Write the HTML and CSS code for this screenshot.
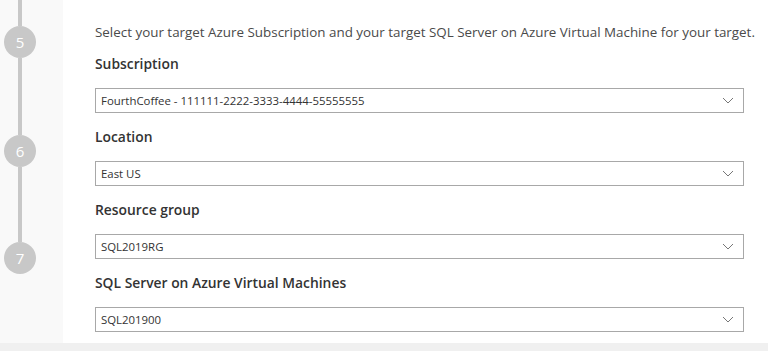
FILE: index.html
```html
<!DOCTYPE html>
<html lang="en">
<head>
<meta charset="utf-8">
<title>Target settings</title>
<link rel="stylesheet" href="styles.css">
</head>
<body>
<div class="page">
  <div class="main">
    <div class="timeline">
      <div class="seg seg-a"></div>
      <div class="step">5</div>
      <div class="seg seg-b"></div>
      <div class="step">6</div>
      <div class="seg seg-c"></div>
      <div class="step">7</div>
    </div>
    <div class="content">
      <p class="desc">Select your target Azure Subscription and your target SQL Server on Azure Virtual Machine for your target.</p>
      <div class="field">
        <div class="label">Subscription</div>
        <div class="select"><span class="value">FourthCoffee - 111111-2222-3333-4444-55555555</span><svg class="chev" width="12" height="7" viewBox="0 0 12 7"><path d="M1 1 L6 6 L11 1" fill="none" stroke="#777" stroke-width="1"/></svg></div>
      </div>
      <div class="field">
        <div class="label">Location</div>
        <div class="select"><span class="value">East US</span><svg class="chev" width="12" height="7" viewBox="0 0 12 7"><path d="M1 1 L6 6 L11 1" fill="none" stroke="#777" stroke-width="1"/></svg></div>
      </div>
      <div class="field">
        <div class="label">Resource group</div>
        <div class="select"><span class="value">SQL2019RG</span><svg class="chev" width="12" height="7" viewBox="0 0 12 7"><path d="M1 1 L6 6 L11 1" fill="none" stroke="#777" stroke-width="1"/></svg></div>
      </div>
      <div class="field">
        <div class="label">SQL Server on Azure Virtual Machines</div>
        <div class="select"><span class="value">SQL201900</span><svg class="chev" width="12" height="7" viewBox="0 0 12 7"><path d="M1 1 L6 6 L11 1" fill="none" stroke="#777" stroke-width="1"/></svg></div>
      </div>
    </div>
  </div>
  <div class="bottom"></div>
</div>
</body>
</html>
```
FILE: styles.css
```css
html, body {
  margin: 0;
  padding: 0;
  background: #ffffff;
}
body {
  width: 768px;
  height: 351px;
  overflow: hidden;
  font-family: "Open Sans", "Noto Sans", sans-serif;
}
.page {
  display: flex;
  flex-direction: column;
  height: 351px;
}
.main {
  display: flex;
  height: 343px;
}
.timeline {
  width: 63px;
  flex: none;
  background: #f9f9f9;
  display: flex;
  flex-direction: column;
  padding-left: 4px;
  box-sizing: border-box;
}
.seg {
  width: 4px;
  margin-left: 14px;
  background: #c8c8c8;
}
.seg-a { height: 26px; }
.seg-b { height: 77px; }
.seg-c { height: 75px; }
.step {
  width: 32px;
  height: 32px;
  border-radius: 50%;
  background: #c8c8c8;
  color: #ffffff;
  font-size: 15px;
  line-height: 32px;
  text-align: center;
}
.content {
  flex: 1;
  background: #ffffff;
  padding: 22px 0 0 32px;
  display: flex;
  flex-direction: column;
  gap: 14px;
}
.desc {
  margin: 0 0 -2px 0;
  font-size: 13.4px;
  line-height: 20px;
  color: #4a4a4a;
  white-space: nowrap;
}
.field {
  display: flex;
  flex-direction: column;
  gap: 14px;
}
.label {
  font-size: 13.85px;
  line-height: 20px;
  font-weight: 600;
  color: #333333;
}
.select {
  width: 649px;
  height: 25px;
  box-sizing: border-box;
  border: 1px solid #a8a8a8;
  display: flex;
  align-items: center;
  justify-content: space-between;
  padding: 0 9px 0 5px;
}
.value {
  font-size: 11.4px;
  color: #333333;
}
.chev {
  display: block;
}
.bottom {
  height: 8px;
  background: #f0f0f0;
}
```
